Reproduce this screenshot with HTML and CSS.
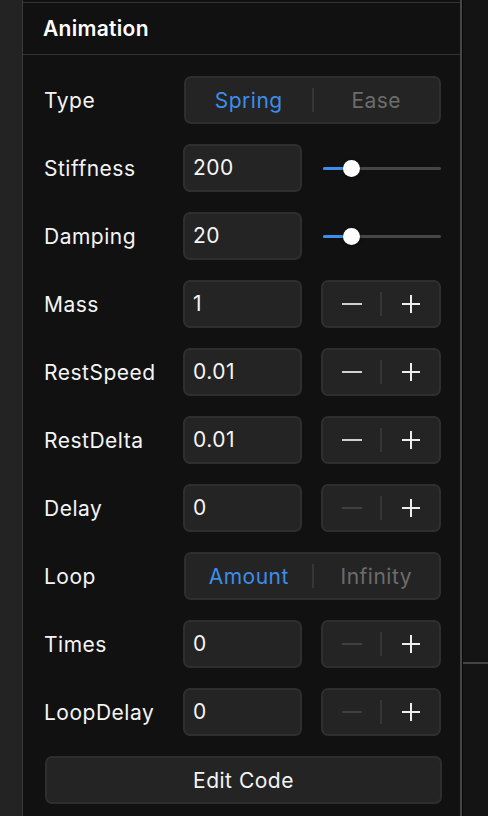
FILE: index.html
```html
<!doctype html>
<html lang="en">
<head>
	<meta charset="UTF-8" />
	<title>Animation</title>
<link rel="stylesheet" href="styles.css">
</head>
<body>
	<section class="layout">
		<div class="side-left"></div>
		<div class="panel">
			<header class="panel-head">Animation</header>
			<div class="rows">
				<div class="row">
					<span class="label">Type</span>
					<div class="segment">
						<a href="javascript:;" class="active">Spring</a>
						<i></i>
						<a href="javascript:;">Ease</a>
					</div>
				</div>
				<div class="row">
					<span class="label">Stiffness</span>
					<div class="field">200</div>
					<div class="slider"><span class="fill"></span><span class="knob"></span></div>
				</div>
				<div class="row">
					<span class="label">Damping</span>
					<div class="field">20</div>
					<div class="slider"><span class="fill"></span><span class="knob"></span></div>
				</div>
				<div class="row">
					<span class="label">Mass</span>
					<div class="field">1</div>
					<div class="stepper">
						<button class="minus"><svg width="20" height="20" viewBox="0 0 20 20"><path d="M0 10H20"/></svg></button>
						<i></i>
						<button class="plus"><svg width="20" height="20" viewBox="0 0 20 20"><path d="M1 10H19M10 1V19"/></svg></button>
					</div>
				</div>
				<div class="row">
					<span class="label">RestSpeed</span>
					<div class="field">0.01</div>
					<div class="stepper">
						<button class="minus"><svg width="20" height="20" viewBox="0 0 20 20"><path d="M0 10H20"/></svg></button>
						<i></i>
						<button class="plus"><svg width="20" height="20" viewBox="0 0 20 20"><path d="M1 10H19M10 1V19"/></svg></button>
					</div>
				</div>
				<div class="row">
					<span class="label">RestDelta</span>
					<div class="field">0.01</div>
					<div class="stepper">
						<button class="minus"><svg width="20" height="20" viewBox="0 0 20 20"><path d="M0 10H20"/></svg></button>
						<i></i>
						<button class="plus"><svg width="20" height="20" viewBox="0 0 20 20"><path d="M1 10H19M10 1V19"/></svg></button>
					</div>
				</div>
				<div class="row">
					<span class="label">Delay</span>
					<div class="field">0</div>
					<div class="stepper">
						<button class="minus disabled"><svg width="20" height="20" viewBox="0 0 20 20"><path d="M0 10H20"/></svg></button>
						<i></i>
						<button class="plus"><svg width="20" height="20" viewBox="0 0 20 20"><path d="M1 10H19M10 1V19"/></svg></button>
					</div>
				</div>
				<div class="row">
					<span class="label">Loop</span>
					<div class="segment">
						<a href="javascript:;" class="active">Amount</a>
						<i></i>
						<a href="javascript:;">Infinity</a>
					</div>
				</div>
				<div class="row">
					<span class="label">Times</span>
					<div class="field">0</div>
					<div class="stepper">
						<button class="minus disabled"><svg width="20" height="20" viewBox="0 0 20 20"><path d="M0 10H20"/></svg></button>
						<i></i>
						<button class="plus"><svg width="20" height="20" viewBox="0 0 20 20"><path d="M1 10H19M10 1V19"/></svg></button>
					</div>
				</div>
				<div class="row">
					<span class="label">LoopDelay</span>
					<div class="field">0</div>
					<div class="stepper">
						<button class="minus disabled"><svg width="20" height="20" viewBox="0 0 20 20"><path d="M0 10H20"/></svg></button>
						<i></i>
						<button class="plus"><svg width="20" height="20" viewBox="0 0 20 20"><path d="M1 10H19M10 1V19"/></svg></button>
					</div>
				</div>
				<button class="edit-code">Edit Code</button>
			</div>
		</div>
		<div class="side-right">
			<div class="side-right-top"></div>
			<div class="side-right-bottom"></div>
		</div>
	</section>
</body>
</html>
```

FILE: styles.css
```css
body{
	margin: 0;
	padding: 0;
	background: #121212;
	font-family: Inter, "Noto Sans", sans-serif;
	letter-spacing: 0.5px;
	color: #f4f4f4;
}
.layout{
	display: flex;
	height: 816px;
	overflow: hidden;
}
.side-left{
	width: 22px;
	flex: none;
	background: #232323;
}
.panel{
	width: 440px;
	flex: none;
	background: #111;
	border-left: 1px solid #3a3a3a;
	border-right: 2px solid #464646;
	box-sizing: border-box;
}
.panel-head{
	margin-top: 2px;
	border-top: 1px solid #333;
	border-bottom: 1px solid #333;
	height: 51px;
	line-height: 51px;
	padding-left: 20px;
	font-size: 21px;
	font-weight: 600;
	letter-spacing: 0.3px;
	color: #fff;
}
.rows{
	padding: 21px 19px 0 21px;
	display: flex;
	flex-direction: column;
	gap: 20px;
}
.row{
	display: flex;
	align-items: center;
	height: 48px;
}
.label{
	width: 139px;
	flex: none;
	font-size: 21px;
}
.field{
	width: 119px;
	height: 48px;
	box-sizing: border-box;
	margin-right: 19px;
	padding-left: 8px;
	background: #242424;
	border: 2px solid #2e2e2e;
	border-radius: 7px;
	font-size: 21px;
	line-height: 44px;
	color: #f5f5f5;
}
.segment{
	width: 258px;
	height: 48px;
	box-sizing: border-box;
	display: flex;
	align-items: center;
	background: #242424;
	border: 2px solid #2e2e2e;
	border-radius: 7px;
	margin-left: 1px;
}
.segment a{
	flex: 1;
	text-align: center;
	font-size: 21px;
	color: #6c6c6c;
	text-decoration: none;
}
.segment a.active{
	color: #3c8eea;
}
.segment i, .stepper i{
	width: 2px;
	height: 24px;
	background: #363636;
	flex: none;
}
.slider{
	width: 118px;
	height: 3px;
	position: relative;
	background: #464646;
	border-radius: 2px;
	margin-left: 2px;
}
.slider .fill{
	display: block;
	width: 28px;
	height: 3px;
	background: #3c8eea;
	border-radius: 2px;
}
.slider .knob{
	position: absolute;
	left: 20px;
	top: -7px;
	width: 17px;
	height: 17px;
	border-radius: 50%;
	background: #fff;
	box-shadow: 0 1px 3px rgba(0,0,0,.5);
}
.stepper{
	width: 120px;
	height: 48px;
	box-sizing: border-box;
	display: flex;
	align-items: center;
	background: #242424;
	border: 2px solid #2e2e2e;
	border-radius: 7px;
}
.stepper button{
	flex: 1;
	height: 100%;
	background: none;
	border: 0;
	padding: 0;
	display: flex;
	align-items: center;
	justify-content: center;
}
.stepper svg path{
	stroke: #d0d0d0;
	stroke-width: 2;
	fill: none;
}
.stepper .plus svg path{
	stroke: #eee;
}
.stepper .minus.disabled svg path{
	stroke: #404040;
}
.edit-code{
	height: 48px;
	width: 397px;
	margin-left: 1px;
	background: #242424;
	border: 2px solid #2e2e2e;
	border-radius: 7px;
	font-family: Inter, "Noto Sans", sans-serif;
	font-size: 21px;
	letter-spacing: 0.5px;
	font-weight: 400;
	color: #f4f4f4;
}
.side-right{
	flex: 1;
	background: #141414;
	border-left: 1px solid #0a0a0a;
}
.side-right-top{
	height: 662px;
}
.side-right-bottom{
	border-top: 2px solid #444;
}
```
